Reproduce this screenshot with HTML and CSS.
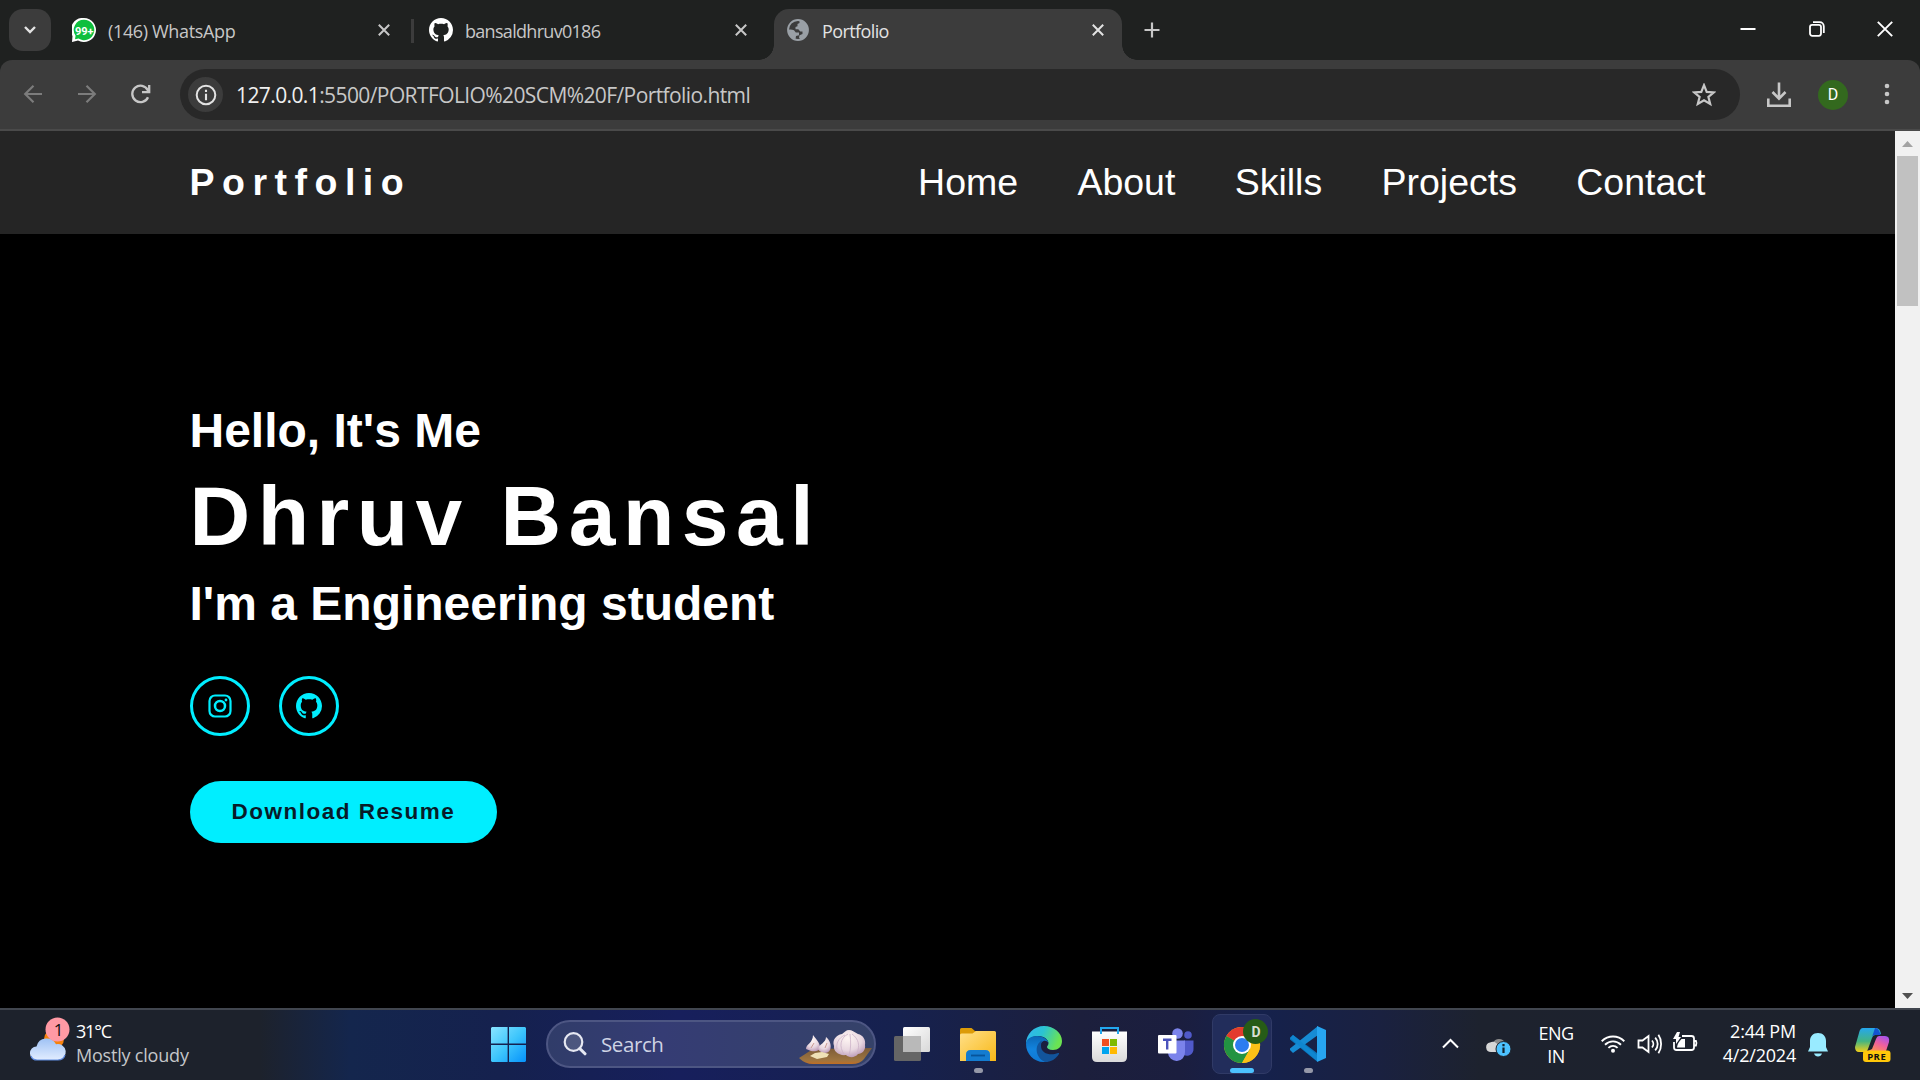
FILE: index.html
```html
<!DOCTYPE html>
<html lang="en">
<head>
<meta charset="utf-8">
<title>Portfolio</title>
<link rel="stylesheet" href="styles.css">
</head>
<body>
<svg class="defs" aria-hidden="true">
  <defs>
    <symbol id="github" viewBox="0 0 16 16"><path fill="currentColor" d="M8 0C3.58 0 0 3.58 0 8c0 3.54 2.29 6.53 5.47 7.59.4.07.55-.17.55-.38 0-.19-.01-.82-.01-1.49-2.01.37-2.53-.49-2.69-.94-.09-.23-.48-.94-.82-1.13-.28-.15-.68-.52-.01-.53.63-.01 1.08.58 1.23.82.72 1.21 1.87.87 2.33.66.07-.52.28-.87.51-1.07-1.78-.2-3.64-.89-3.64-3.95 0-.87.31-1.59.82-2.15-.08-.2-.36-1.02.08-2.12 0 0 .67-.21 2.2.82.64-.18 1.32-.27 2-.27s1.36.09 2 .27c1.53-1.04 2.2-.82 2.2-.82.44 1.1.16 1.92.08 2.12.51.56.82 1.27.82 2.15 0 3.07-1.87 3.75-3.65 3.95.29.25.54.73.54 1.48 0 1.07-.01 1.93-.01 2.2 0 .21.15.46.55.38A8.01 8.01 0 0 0 16 8c0-4.42-3.58-8-8-8z"/></symbol>
    <symbol id="cross" viewBox="0 0 12 12"><path d="M0.8 0.8L11.2 11.2M11.2 0.8L0.8 11.2" fill="none" stroke="currentColor" stroke-width="2"/></symbol>
  </defs>
</svg>

<header class="tabs">
  <button class="tab-search"><svg width="12" height="8" viewBox="0 0 12 8"><path d="M1 1l5 5 5-5" fill="none" stroke="#e3e3e3" stroke-width="2.4"/></svg></button>
  <div class="tab tab-whatsapp">
    <svg class="fav" viewBox="0 0 24 24"><path d="M12 0a12 12 0 1 1-6 22.4L0 24l.5-6A12 12 0 0 1 12 0z" fill="#fff"/><path d="M12 1.800a10.200 10.200 0 1 1-5.400 18.800L3 21.200l.6-3.400A10.200 10.200 0 0 1 12 1.800z" fill="#0fbf3e"/><text x="12.300" y="16.500" text-anchor="middle" class="fav-count">99+</text></svg>
    <span class="title t1">(146) WhatsApp</span>
    <svg class="x" width="12" height="12"><use href="#cross"/></svg>
  </div>
  <i class="sep"></i>
  <div class="tab tab-github">
    <svg class="fav"><use href="#github"/></svg>
    <span class="title t2">bansaldhruv0186</span>
    <svg class="x" width="12" height="12"><use href="#cross"/></svg>
  </div>
  <div class="tab tab-active">
    <svg class="globe" viewBox="0 0 22 22"><circle cx="11" cy="11" r="10" fill="#3c3c3c" stroke="#9aa0a6" stroke-width="1.800"/><path d="M12.500 1.200C17.500 2 21 6 21 11c0 4.500-3 8.500-7.500 9.700L12 18.500l.5-2.200 3-1.300v-2.500h-2.200l-2-2.300H8.500V8l2-.8V5l2-1z" fill="#9aa0a6"/><path d="M1 11c1.500-.6 4-.6 6 .2l1.800 2.300H12v2.800l-3 .7-.5 3.300C4 19.500 1 15.500 1 11z" fill="#9aa0a6"/></svg>
    <span class="title t3">Portfolio</span>
    <svg class="x" width="12" height="12"><use href="#cross"/></svg>
  </div>
  <svg class="plus" width="16" height="16" viewBox="0 0 16 16"><path d="M8 .5v15M.5 8h15" stroke="#c7c7c7" stroke-width="2.200"/></svg>
  <div class="window-buttons">
    <svg width="16" height="16" viewBox="0 0 16 16"><path d="M.5 8h15" stroke="#fff" stroke-width="2"/></svg>
    <svg width="16" height="16" viewBox="0 0 16 16" fill="none" stroke="#fff" stroke-width="1.800"><rect x="1" y="3.800" width="11" height="11" rx="2.200"/><path d="M4 1.200h6.500c2.600 0 4.300 1.700 4.300 4.300V12"/></svg>
    <svg width="16" height="16" viewBox="0 0 16 16"><path d="M.8.8l14.400 14.400M15.200.8L.8 15.200" stroke="#fff" stroke-width="1.900"/></svg>
  </div>
</header>

<div class="toolbar">
  <div class="nav-icons">
    <svg width="20" height="20" viewBox="0 0 20 20" fill="none" stroke="#7c7c7c" stroke-width="2.200"><path d="M19 10H2.500M10.500 1.700L2.200 10l8.300 8.300"/></svg>
    <svg width="20" height="20" viewBox="0 0 20 20" fill="none" stroke="#7c7c7c" stroke-width="2.200"><path d="M1 10h16.500M9.500 1.700l8.300 8.300-8.300 8.300"/></svg>
    <svg width="20" height="20" viewBox="0 0 20 20" fill="none" stroke="#c7c7c7" stroke-width="2.300"><path d="M17 13.200A8.200 8.200 0 1 1 16.800 6.200L17.800 8M18.200 1v7.200h-7.200"/></svg>
  </div>
  <div class="address">
    <span class="info"><svg width="22" height="22" viewBox="0 0 22 22"><circle cx="11" cy="11" r="9.300" fill="none" stroke="#e3e3e3" stroke-width="2"/><path d="M11 9.700v6.600M11 5.700v2.200" stroke="#e3e3e3" stroke-width="2.100"/></svg></span>
    <span class="url"><b>127.0.0.1</b>:5500/PORTFOLIO%20SCM%20F/Portfolio.html</span>
    <svg class="star" width="24" height="24" viewBox="0 0 24 24"><path d="M12 2.200l2.700 6.700 7.200.5-5.500 4.600 1.800 7L12 17.200 5.800 21l1.800-7-5.500-4.600 7.200-.5z" fill="none" stroke="#c7c7c7" stroke-width="2.200"/></svg>
  </div>
  <svg class="download" width="24" height="26" viewBox="0 0 24 26" fill="none" stroke="#c7c7c7" stroke-width="2.600"><path d="M12 .5v16M5.500 10l6.500 6.700 6.500-6.700M1.300 16.500v7.200h21.400v-7.200"/></svg>
  <span class="avatar">D</span>
  <svg class="dots" width="6" height="22" viewBox="0 0 6 22" fill="#c7c7c7"><circle cx="3" cy="3" r="2.300"/><circle cx="3" cy="11" r="2.300"/><circle cx="3" cy="19" r="2.300"/></svg>
</div>

<div class="viewport">
  <div class="page">
    <div class="site-header">
      <span class="logo">Portfolio</span>
      <nav><a>Home</a><a>About</a><a>Skills</a><a>Projects</a><a>Contact</a></nav>
    </div>
    <main class="hero">
      <h3>Hello, It's Me</h3>
      <h1>Dhruv Bansal</h1>
      <h3 class="role">I'm a Engineering student</h3>
      <div class="social">
        <a><svg width="24" height="24" viewBox="0 0 24 24" fill="none" stroke="currentColor" stroke-width="2.200"><rect x="1.500" y="1.500" width="21" height="21" rx="5.500"/><circle cx="12" cy="12" r="5" stroke-width="2.500"/><circle cx="18" cy="6" r="1.400" fill="currentColor" stroke="none"/></svg></a>
        <a><svg width="26" height="26"><use href="#github"/></svg></a>
      </div>
      <a class="resume">Download Resume</a>
    </main>
  </div>
  <div class="scrollbar">
    <svg width="11" height="6" viewBox="0 0 11 6"><path d="M0 6L5.500 0 11 6z" fill="#a3a3a3"/></svg>
    <i class="thumb"></i>
    <svg class="down" width="11" height="6" viewBox="0 0 11 6"><path d="M0 0h11L5.500 6z" fill="#505050"/></svg>
  </div>
</div>

<footer class="taskbar">
  <div class="weather">
    <svg width="42" height="46" viewBox="0 0 42 46">
      <defs><linearGradient id="cl" x2="0" y2="1"><stop stop-color="#9fc2f5"/><stop offset="1" stop-color="#e2edff"/></linearGradient></defs>
      <circle cx="25" cy="22" r="10" fill="#f6820c"/>
      <path d="M8 43a6.800 6.800 0 0 1-.5-13.600A10.500 10.500 0 0 1 27 27.200 8 8 0 1 1 29 43z" fill="url(#cl)"/>
      <path d="M2 39c1 3 3 4 6 4h21c3 0 6-2 7-5" fill="none" stroke="#5f8be0" stroke-width="1.200"/>
      <circle cx="28.500" cy="12.500" r="12" fill="#ff99a4"/>
      <text x="29.500" y="18.500" text-anchor="middle" class="badge-num">1</text>
    </svg>
    <div class="weather-text"><span class="temp">31°C</span><span class="cond">Mostly cloudy</span></div>
  </div>

  <div class="center">
    <svg class="start" width="35" height="35" viewBox="0 0 35 35"><defs><linearGradient id="win" x2="1" y2="1"><stop stop-color="#8ae4ff"/><stop offset=".5" stop-color="#3fc6fc"/><stop offset="1" stop-color="#0592fb"/></linearGradient></defs><path d="M1 0h15.600v16.600H0V1zM18 0h16l1 1v15.600H18zM0 18h16.600v17H1l-1-1zM18 18h17v16l-1 1H18z" fill="url(#win)"/></svg>
    <div class="search">
      <svg width="24" height="24" viewBox="0 0 24 24" fill="none" stroke="#e6e8f2"><circle cx="10.500" cy="10" r="8.800" stroke-width="2.200" fill="#ffffff22"/><path d="M16.800 16.600l5.200 5.200" stroke-width="3" stroke-linecap="round"/></svg>
      <span>Search</span>
      <svg class="garlic" width="73" height="36" viewBox="0 0 73 36">
        <defs><linearGradient id="board" x2="0" y2="1"><stop stop-color="#7d5c38"/><stop offset=".75" stop-color="#9c7440"/><stop offset="1" stop-color="#c06e25"/></linearGradient><radialGradient id="bulb" cx=".45" cy=".3" r=".75"><stop stop-color="#fff6f3"/><stop offset=".6" stop-color="#e8d7e0"/><stop offset="1" stop-color="#b795b4"/></radialGradient></defs>
        <path d="M0 29l14-9 59-1-8 11q-4 5-12 5H14Q6 35 0 29z" fill="url(#board)"/>
        <path d="M7 20c0-5 7-6 7-14 3 4 7 8 7 12s-5 5-9 4z" fill="url(#bulb)"/><path d="M19 20c1-5 8-6 8-12 4 3 6 9 4 13s-9 4-12-1z" fill="url(#bulb)"/>
        <path d="M12 19l3-5M26 19l2-5" stroke="#c99a92" fill="none"/>
        <path d="M11 27l5-3 7-1 7 2-2 3-10 2z" fill="#efe1b6"/>
        <path d="M50 1c3 0 5 2 9 4 5 1 8 6 7 11 1 5-3 9-7 9-3 4-9 4-12 1-7 1-13-4-12-9-2-6 2-11 8-12 3-2 4-4 7-4z" fill="url(#bulb)"/>
        <path d="M49 5c-8 4-9 13-4 20M51 5c1 8 1 14-1 22M53 5c7 5 8 12 5 19M46 6c-7 3-9 9-8 14" stroke="#cbb2c8" fill="none" stroke-width=".8"/>
      </svg>
    </div>
    <div class="apps">
      <span class="app"><svg width="36" height="36" viewBox="0 0 36 36"><defs><linearGradient id="tv" x2="1" y2="1"><stop stop-color="#fff"/><stop offset="1" stop-color="#d8d8d8"/></linearGradient></defs><rect y="10" width="27" height="25" rx="1.500" fill="#656565"/><rect x="9" y="1" width="27" height="25" rx="1.500" fill="url(#tv)"/><path d="M9 10h18v16H10l-1-1z" fill="#b9b9b9"/></svg></span>
      <span class="app run"><svg width="36" height="36" viewBox="0 0 36 36"><defs><linearGradient id="fo" x2="1" y2="1"><stop stop-color="#ffe08a"/><stop offset="1" stop-color="#f8b817"/></linearGradient></defs><path d="M0 3.500q0-1.500 1.500-1.500h10L15 5h5v5H0z" fill="#dc9b08"/><path d="M0 9q0-1.500 1.500-1.500h11L16 5h18.500Q36 5 36 6.500V35H0z" fill="url(#fo)"/><path d="M6 35V28.500q0-4.500 4.500-4.500h15q4.500 0 4.500 4.500V35z" fill="#147cd0"/><path d="M11 29.500h14" stroke="#07549a" stroke-width="1.800"/></svg></span>
      <span class="app"><svg width="36" height="36" viewBox="0 0 36 36"><defs><linearGradient id="e1" x2="1" y2=".3"><stop stop-color="#31b5f2"/><stop offset=".5" stop-color="#2bc3d2"/><stop offset="1" stop-color="#6be352"/></linearGradient><linearGradient id="e2" x2="0" y2="1"><stop stop-color="#0b67b5"/><stop offset=".5" stop-color="#1283dd"/><stop offset="1" stop-color="#0f78d4"/></linearGradient></defs><path d="M0 18C0 8 8 0 18 0s18 7 18 15c0 6-4 9-9 9-4 0-6-1.500-6-3 0-1 1.500-1.500 1.500-4S19 10 12 10C5 10 1 14 0 18z" fill="url(#e1)"/><path d="M0 18c0-5 5-8 11-8 7 0 11 4 11.500 7-1-1.500-3-2.500-5-2-7 4-5 16 5 20-1 .7-3 1-5 1C8 36 0 28 0 18z" fill="url(#e2)"/><path d="M16 14.500c-8 4-7 17 3 21.500 6 0 11-3 14-8 .5-1-.3-1.300-1-1-7 3-17 1-17-7 0-2 .5-4 1-5.500z" fill="#12549b"/></svg></span>
      <span class="app"><svg width="36" height="36" viewBox="0 0 36 36"><defs><linearGradient id="st" x2="0" y2="1"><stop stop-color="#fff"/><stop offset="1" stop-color="#dadada"/></linearGradient></defs><path d="M0 5.500h35V31q0 5-5 5H5q-5 0-5-5z" fill="url(#st)"/><path d="M9 8V2h17v6" fill="none" stroke="#22a7ee" stroke-width="2"/><path d="M10 13h7v7h-7z" fill="#f15022"/><path d="M18 13h7v7h-7z" fill="#7fba00"/><path d="M10 21h7v7h-7z" fill="#00a4ef"/><path d="M18 21h7v7h-7z" fill="#ffb902"/></svg></span>
      <span class="app"><svg width="36" height="36" viewBox="0 0 36 36"><circle cx="30" cy="9" r="3.800" fill="#5059c9"/><path d="M26 14.500h9.500V23a6.500 6.500 0 0 1-9.500 6z" fill="#5059c9"/><circle cx="19.500" cy="7.500" r="5.300" fill="#7b83eb"/><path d="M10 14.500h17V26a8.500 8.500 0 0 1-17 1z" fill="#7b83eb"/><rect y="9" width="18.500" height="18.500" rx="1" fill="#fff"/><path d="M5 13.800h8.500M9.200 13.500v10" stroke="#4b53bc" stroke-width="2.400"/></svg></span>
      <span class="app active"><svg width="46" height="44" viewBox="0 0 46 44"><circle cx="19" cy="26" r="18" fill="#fbc117"/><path d="M19 26L3.400 17A18 18 0 0 1 34.600 17z" fill="#e33b2e"/><path d="M19 26L3.400 17A18 18 0 0 0 19 44l8-14z" fill="#229342"/><path d="M19 17h15.600A18 18 0 0 1 19 44l8-14z" fill="#fbc117"/><circle cx="19" cy="26" r="9" fill="#fff"/><circle cx="19" cy="26" r="7" fill="#2c7cf0"/><circle cx="32.500" cy="12.500" r="12.500" fill="#265c17"/><text x="33" y="18" text-anchor="middle" class="chrome-d">D</text></svg></span>
      <span class="app run"><svg width="36" height="36" viewBox="0 0 36 36"><path d="M0 12l3-3 24 18v8.500L0 13.500z" fill="#0a76bd"/><path d="M0 24l3 3L28 9V0L0 22.500z" fill="#168bd4"/><path d="M0 12l3-3 24 20v6z" fill="#0f86d0"/><path d="M27 0l9 4v28l-9 4z" fill="#27a5f0"/></svg></span>
    </div>
  </div>

  <div class="tray">
    <svg class="chev" width="17" height="11" viewBox="0 0 17 11"><path d="M1 9.500l7.500-7.500L16 9.500" fill="none" stroke="#fff" stroke-width="2"/></svg>
    <svg class="cloud" width="26" height="22" viewBox="0 0 26 22"><path d="M7 8a6.500 6.500 0 0 1 12 0v7H9z" fill="#8c8c8c"/><path d="M5 17A4.800 4.800 0 0 1 4 7.500c4-2 7 .5 8 3l5 6.500z" fill="#d6d6d6"/><circle cx="17.500" cy="14" r="7.500" fill="#4cc2ff" stroke="#1d222c"/><path d="M17.500 12.500v5.500M17.500 9v2.200" stroke="#12222e" stroke-width="2.200"/></svg>
    <span class="lang">ENG<br>IN</span>
    <svg class="wifi" width="24" height="18" viewBox="0 0 24 18" fill="none" stroke="#fff" stroke-width="1.900"><path d="M.7 6.200c6.500-6.300 16.100-6.300 22.600 0M4 9.700c4.700-4.500 11.300-4.500 16 0M7.400 12.900c2.700-2.600 6.500-2.600 9.200 0"/><circle cx="12" cy="15.800" r="2" fill="#fff" stroke="none"/></svg>
    <svg class="vol" width="26" height="20" viewBox="0 0 26 20" fill="none" stroke="#fff" stroke-width="1.800"><path d="M1.500 6.500h4L11.500 2v16L5.500 13.500h-4zM15 6.500c1.800 2 1.800 5 0 7M18.200 3.700c3.300 3.700 3.300 8.900 0 12.600M21.400.8c3.600 5.300 3.600 13.100 0 18.400"/></svg>
    <svg class="bat" width="25" height="20" viewBox="0 0 25 20"><path d="M9 4h9.500Q21 4 21 6.500v9q0 2.500-2.500 2.500h-15Q1 18 1 15.500V10M21.500 9h1.500q1 2.200 0 4.500h-1.500" fill="none" stroke="#fff" stroke-width="1.800"/><path d="M8.500 7h3.500v8.500H4q0-4 4.500-8.500z" fill="#fff"/><path d="M4 0L0 7h3v5l5-7H5.500L7 0z" fill="#fff"/></svg>
    <span class="clock">2:44 PM<br>4/2/2024</span>
    <svg class="bell" width="20" height="24" viewBox="0 0 20 24" fill="#99ebff"><path d="M10 0c5 0 8 3.500 8 8v6l2 4.500H0L2 14V8c0-4.500 3-8 8-8zM6 20.500h8q-1 3-4 3t-4-3z"/></svg>
    <svg class="copilot" width="36" height="36" viewBox="0 0 36 36"><defs><linearGradient id="cp1" x2="0" y2="1"><stop stop-color="#25a7ee"/><stop offset=".55" stop-color="#43b482"/><stop offset="1" stop-color="#f3cf17"/></linearGradient><linearGradient id="cp2" x1=".8" x2=".2" y2="1"><stop stop-color="#a553ee"/><stop offset=".5" stop-color="#f0609c"/><stop offset="1" stop-color="#ff9351"/></linearGradient></defs><path d="M8 1h13q4 0 5 6l-6 1q-2 0-3 3l-4 11q-1 3-4 3H4q-4 0-4-5L4 6Q5 1 8 1z" fill="url(#cp1)"/><path d="M20 1q4 0 5.500 7H20q-2 0-3 2L20 1z" fill="#1454d0"/><path d="M24 9h6q5 0 4 6l-3 9H13l4-2 4-10q1-3 3-3z" fill="url(#cp2)"/><rect x="8" y="23.500" width="27.500" height="11.500" rx="3" fill="#ffc80a"/><text x="21.700" y="32.500" text-anchor="middle" class="pre">PRE</text></svg>
  </div>
</footer>
</body>
</html>
```
FILE: styles.css
```css
* { box-sizing: border-box; }
body {
  margin: 0; width: 1920px; height: 1080px; overflow: hidden;
  display: flex; flex-direction: column;
  background: #1f2120; color: #fff;
  font-family: "Open Sans", "Noto Sans", sans-serif;
}
svg { display: block; flex: none; }
.defs { position: absolute; width: 0; height: 0; }

/* Browser tab strip */
.tabs { height: 60px; flex: none; display: flex; align-items: flex-start; background: #1f2120; }
.tab-search { margin: 9px 0 0 9px; width: 42px; height: 42px; padding: 0; border: 0; border-radius: 14px; background: #3c3c3c; display: grid; place-items: center; flex: none; }
.tab { display: flex; align-items: center; height: 60px; color: #c7c7c7; flex: none; }
.tab-whatsapp { width: 360px; padding: 0 21px 0 21px; }
.tab-github { width: 360px; padding: 0 27px 0 15px; }
.fav { width: 24px; height: 24px; color: #fff; }
.fav-count { font: bold 11px Roboto, sans-serif; fill: #fff; }
.title { font-size: 18px; margin-left: 12px; white-space: nowrap; padding-top: 2px; }
.t1 { letter-spacing: -0.35px; }
.t2 { letter-spacing: -0.7px; }
.t3 { letter-spacing: -0.6px; color: #e3e3e3; }
.x { margin-left: auto; }
.sep { width: 3px; height: 24px; margin-top: 19px; background: #3c3c3c; flex: none; }
.tab-active { position: relative; width: 348px; height: 51px; margin-top: 9px; padding: 0 18px 9px 13px; background: #3c3c3c; border-radius: 15px 15px 0 0; color: #e3e3e3; }
.tab-active::before, .tab-active::after { content: ""; position: absolute; bottom: 0; width: 15px; height: 15px; }
.tab-active::before { left: -15px; background: radial-gradient(circle at 0 0, transparent 14.5px, #3c3c3c 15px); }
.tab-active::after { right: -15px; background: radial-gradient(circle at 100% 0, transparent 14.5px, #3c3c3c 15px); }
.globe { width: 22px; height: 22px; }
.t3 { margin-left: 13px; }
.plus { margin: 22px 0 0 22px; }
.window-buttons { margin: 21px 27px 0 auto; display: flex; gap: 52.5px; }

/* Address bar */
.toolbar { height: 71px; flex: none; display: flex; align-items: flex-start; background: #3c3c3c; border-bottom: 2px solid #4a4a4a; border-radius: 12px 12px 0 0; }
.nav-icons { display: flex; gap: 34px; padding: 24px 0 0 23px; width: 180px; }
.address { width: 1560px; height: 51px; margin-top: 9px; border-radius: 26px; background: #282828; display: flex; align-items: center; padding: 0 24px 0 8px; }
.info { width: 35px; height: 35px; border-radius: 50%; background: #3c3c3c; display: grid; place-items: center; }
.url { margin-left: 13px; font-size: 21px; letter-spacing: -0.6px; color: #c7c7c7; white-space: nowrap; }
.url b { font-weight: 400; color: #f0f0f0; }
.star { margin-left: auto; }
.download { margin: 22px 0 0 27px; }
.avatar { margin: 20px 0 0 27px; width: 30px; height: 30px; border-radius: 50%; background: #33691e; font: 16px/30px Roboto, sans-serif; text-align: center; }
.dots { margin: 23px 0 0 36px; }

/* Web page */
.viewport { flex: 1; display: flex; min-height: 0; }
.page { width: 1895px; background: #000; font-family: "Liberation Sans", Arial, sans-serif; }
.site-header { height: 103px; padding: 0 189.5px; background: #252525; display: flex; align-items: center; justify-content: space-between; }
.logo { font-size: 37.5px; font-weight: 700; letter-spacing: 7.5px; }
nav { display: flex; gap: 59.3px; font-size: 37.5px; }
.hero { padding: 169px 189.5px 0; display: flex; flex-direction: column; align-items: flex-start; }
.hero h3 { margin: 0; font-size: 48px; line-height: 56px; }
.hero h1 { margin: 0; font-size: 84px; line-height: 114px; letter-spacing: 7.5px; }
.hero .role { line-height: 61px; }
.social { display: flex; gap: 29px; margin-top: 42px; }
.social a { width: 60px; height: 60px; border: 3px solid #00eeff; border-radius: 50%; color: #00eeff; display: grid; place-items: center; }
.resume { margin-top: 45px; height: 62px; padding: 0 42px; border-radius: 31px; background: #00eeff; color: #081b29; font-size: 22.5px; font-weight: 700; letter-spacing: 1.5px; line-height: 61px; }
.scrollbar { width: 25px; background: #f1f1f1; display: flex; flex-direction: column; align-items: center; padding: 10px 0 9px; }
.thumb { width: 21px; height: 150px; margin-top: 9px; background: #c1c1c1; }
.down { margin-top: auto; }

/* Taskbar */
.taskbar { height: 72px; flex: none; display: flex; border-top: 2px solid #41464f;
  background: linear-gradient(90deg, #1d222c 0, #1d222c 260px, #14264d 350px, #15214e 500px, #171f5c 680px, #16214e 900px, #1c1f3c 1080px, #1b1e3f 1180px, #15214c 1260px, #1a2140 1380px, #1d222e 1480px, #1d222c 100%); }
.weather { display: flex; width: 490px; padding: 7px 0 0 29px; }
.weather-text { display: flex; flex-direction: column; padding: 2px 0 0 5px; font-size: 18px; line-height: 24px; }
.temp { letter-spacing: -1.2px; }
.cond { color: #c4c6c9; letter-spacing: -0.2px; }
.badge-num { font: 17px "Open Sans", sans-serif; fill: #111; }
.center { display: flex; width: 869px; }
.start { margin: 17px 0 0 1px; }
.search { margin: 10px 0 0 20px; width: 330px; height: 48px; border-radius: 24px; border: 2px solid #4d5683; background: linear-gradient(90deg, #303c69, #353c74 35%, #354269); display: flex; align-items: center; padding-left: 15px; font-size: 20.500px; color: #ced3e4; }
.search span { margin-left: 14px; letter-spacing: -0.4px; padding-bottom: 1px; }
.garlic { margin: 6px 2px 0 auto; }
.apps { display: flex; padding: 4px 0 0 6px; gap: 6px; }
.app { width: 60px; height: 60px; border-radius: 8px; display: flex; flex-direction: column; align-items: center; padding-top: 12px; flex: none; }
.run::after { content: ""; width: 9px; height: 5px; border-radius: 3px; background: #9598a8; margin-top: 6px; }
.active { background: #222d5b; border: 1px solid #303a66; padding: 4px 0 0 7px; }
.active::after { content: ""; width: 24px; height: 5px; border-radius: 3px; background: #4cc2ff; margin: 5px 7px 0 0; }
.chrome-d { font: bold 14px Roboto, sans-serif; fill: #d8dfd3; }
.tray { display: flex; align-items: flex-start; width: 561px; padding-left: 83px; font-size: 18px; }
.chev { margin-top: 28px; }
.cloud { margin: 25px 0 0 27px; }
.lang { margin: 12px 0 0 16px; width: 56px; text-align: center; line-height: 23px; letter-spacing: -0.5px; }
.wifi { margin: 25px 0 0 17px; }
.vol { margin: 24px 0 0 12px; }
.bat { margin: 22px 0 0 10px; }
.clock { width: 90px; margin: 9px 0 0 8px; text-align: right; line-height: 24px; letter-spacing: -0.2px; white-space: nowrap; }
.bell { margin: 23px 0 0 12px; }
.copilot { margin: 17px 0 0 27px; }
.pre { font: bold 9.500px "Open Sans", sans-serif; fill: #111; letter-spacing: .5px; }
```
